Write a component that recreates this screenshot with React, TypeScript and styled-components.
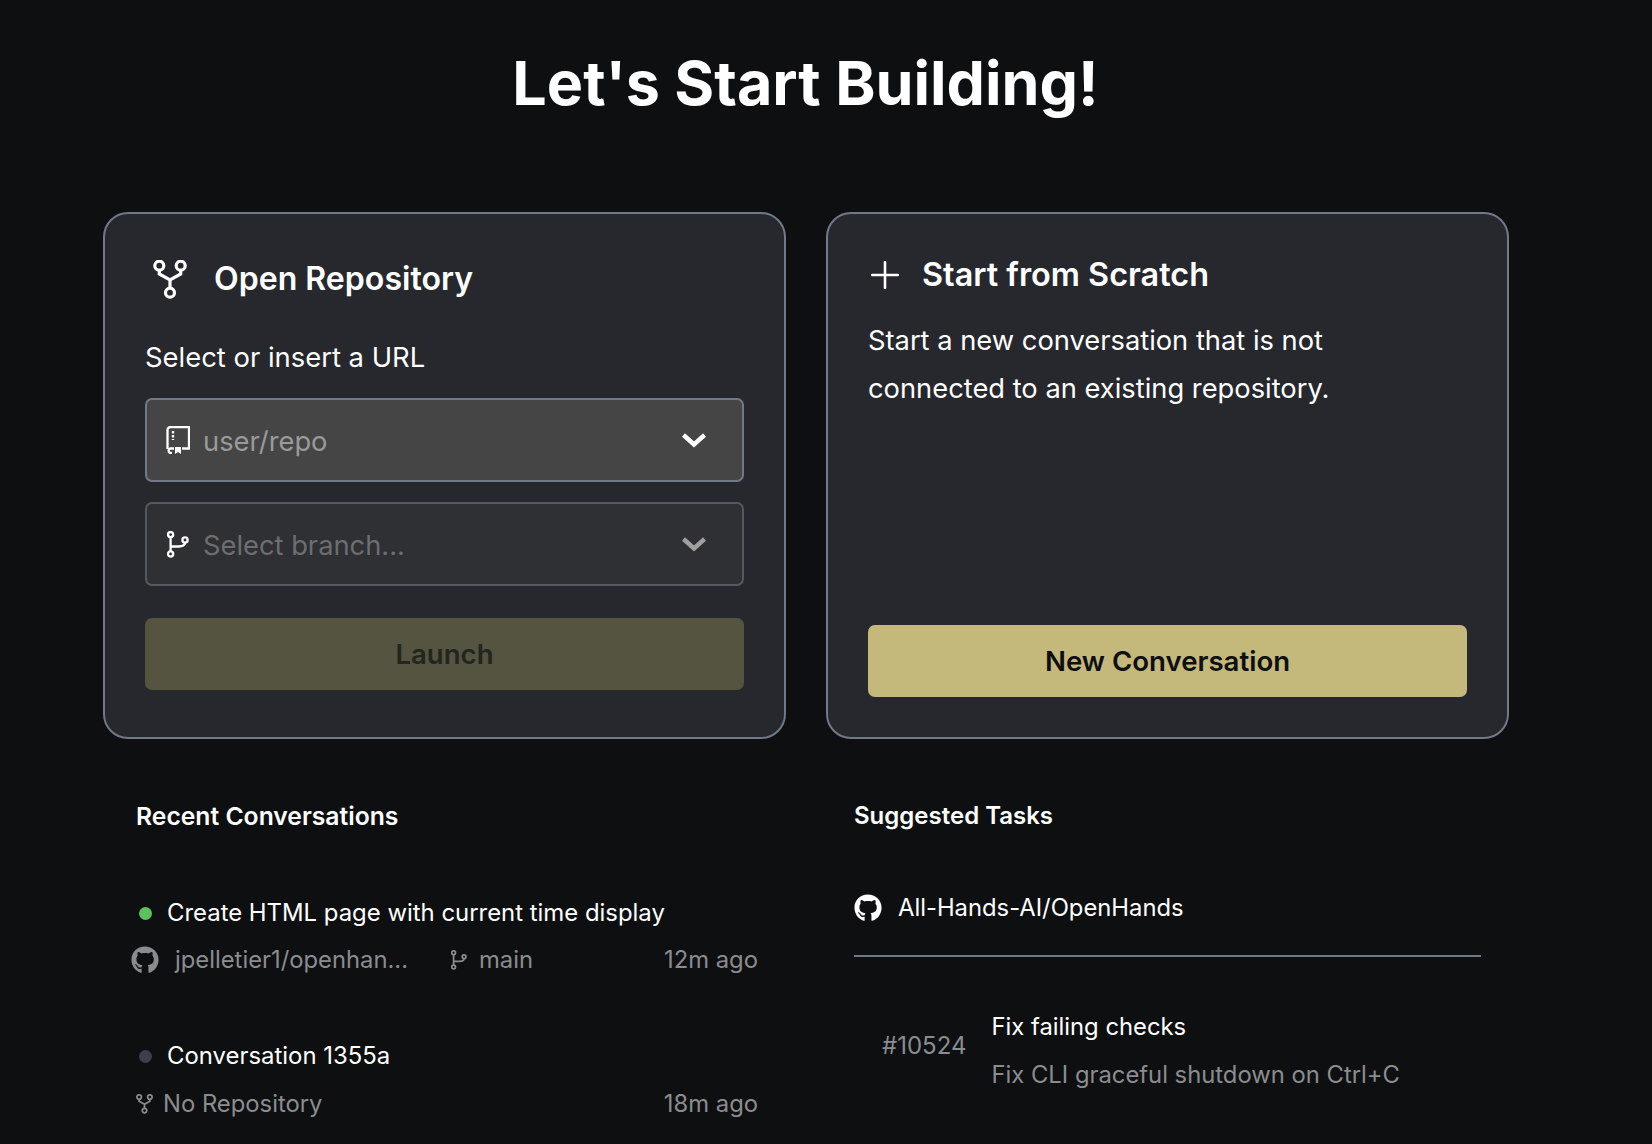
import { createGlobalStyle, styled } from 'styled-components';
import { FaGithub } from 'react-icons/fa';

const GlobalStyle = createGlobalStyle`
  html, body {
    margin: 0;
    height: 1144px;
    overflow: hidden;
    background: #0d0f11;
    color: #ffffff;
    font-family: Inter, "Liberation Sans", sans-serif;
  }
`;

const Page = styled.main`
  width: 1405px;
  margin-left: 103px;
`;

const Title = styled.h1`
  margin: 0;
  padding-top: 47px;
  height: 212px;
  box-sizing: border-box;
  font-size: 61px;
  line-height: 72px;
  font-weight: 700;
  text-align: center;
`;

const CardRow = styled.section`
  display: grid;
  grid-template-columns: 683px 683px;
  gap: 40px;
`;

const Card = styled.div`
  height: 527px;
  box-sizing: border-box;
  padding: 0 40px;
  background: #26282d;
  border: 2px solid #717888;
  border-radius: 25px;
  display: flex;
  flex-direction: column;
`;

const CardHeader = styled.div<{ $top: number; $gap: number; $indent: number; $size: number }>`
  display: flex;
  align-items: center;
  gap: ${(props) => props.$gap}px;
  margin-top: ${(props) => props.$top}px;
  padding-left: ${(props) => props.$indent}px;
  font-size: ${(props) => props.$size}px;
  line-height: 40px;
  font-weight: 600;
`;

const Label = styled.div`
  margin-top: 38px;
  font-size: 27.4px;
  line-height: 40px;
`;

const Select = styled.div<{ $active?: boolean }>`
  height: 84px;
  box-sizing: border-box;
  margin-top: ${(props) => (props.$active ? 21 : 20)}px;
  padding: 0 35px 0 18px;
  display: flex;
  align-items: center;
  gap: 12px;
  background: ${(props) => (props.$active ? '#454545' : '#2f3034')};
  border: 2px solid ${(props) => (props.$active ? '#717888' : '#54585f')};
  border-radius: 7px;
  font-size: 27.3px;
  color: ${(props) => (props.$active ? '#9a9a9a' : '#6d6e71')};
`;

const SelectIcon = styled.span`
  width: 26px;
  display: flex;
  justify-content: center;
`;

const SelectText = styled.span`
  flex: 1;
  position: relative;
  top: 1px;
`;

const ActionButton = styled.div<{ $disabled?: boolean }>`
  height: 72px;
  margin-top: auto;
  margin-bottom: ${(props) => (props.$disabled ? 47 : 40)}px;
  display: flex;
  align-items: center;
  justify-content: center;
  border-radius: 7px;
  font-size: 27.6px;
  font-weight: 600;
  background: ${(props) => (props.$disabled ? '#545441' : '#c4b87b')};
  color: ${(props) => (props.$disabled ? '#24251f' : '#0d0f11')};
`;

const Description = styled.p`
  margin: 22px 0 0;
  font-size: 27.3px;
  line-height: 48.4px;
`;

const Lists = styled.section`
  display: grid;
  grid-template-columns: 683px 655px;
  gap: 40px;
`;

const ListColumn = styled.div<{ $indent: number }>`
  padding-left: ${(props) => props.$indent}px;
`;

const SectionTitle = styled.h3<{ $size: number }>`
  margin: 0;
  padding-top: 61px;
  font-size: ${(props) => props.$size}px;
  line-height: 32px;
  font-weight: 600;
`;

const Conversation = styled.div<{ $top: number }>`
  margin-top: ${(props) => props.$top}px;
  width: 622px;
`;

const ConversationTitle = styled.div`
  display: flex;
  align-items: center;
  gap: 15px;
  padding-left: 3px;
  font-size: 23.9px;
  line-height: 32px;
`;

const Dot = styled.span<{ $color: string }>`
  width: 13px;
  height: 13px;
  border-radius: 50%;
  background: ${(props) => props.$color};
`;

const Meta = styled.div<{ $top: number }>`
  display: flex;
  align-items: center;
  margin-top: ${(props) => props.$top}px;
  font-size: 23.8px;
  line-height: 32px;
  color: #8b8c8f;
`;

const MetaGithub = styled(FaGithub)`
  margin-left: -5px;
  color: #8b8c8f;
`;

const RepoName = styled.span`
  margin-left: 16px;
  width: 276px;
`;

const BranchName = styled.span`
  margin-left: 12px;
`;

const NoRepo = styled.span`
  margin-left: 10px;
`;

const Time = styled.span`
  margin-left: auto;
`;

const RepoHeading = styled.div`
  display: flex;
  align-items: center;
  gap: 16px;
  margin-top: 60px;
  padding-bottom: 31px;
  border-bottom: 2px solid #717888;
  font-size: 23.8px;
  line-height: 32px;
`;

const Task = styled.div`
  display: flex;
  align-items: center;
  gap: 25px;
  margin-top: 46px;
  padding-left: 28px;
`;

const TaskNumber = styled.span`
  margin-bottom: 10px;
  font-size: 24px;
  color: #8b8c8f;
`;

const TaskBody = styled.div`
  font-size: 23.8px;
  line-height: 47.5px;
`;

const TaskDetail = styled.div`
  color: #8b8c8f;
`;

function Chevron({ color }: { color: string }) {
  return (
    <svg width="26" height="16" viewBox="0 0 26 16" fill="none">
      <path d="M2.5 3L13 12.5 23.5 3" stroke={color} strokeWidth="4.4" />
    </svg>
  );
}

function PlusIcon() {
  return (
    <svg width="28" height="28" viewBox="0 0 28 28" fill="none" stroke="#ffffff" strokeWidth="2.6" strokeLinecap="round">
      <path d="M14 1.2v25.6M1.2 14h25.6" />
    </svg>
  );
}

function ForkIcon({ width, height, color, weight }: { width: number; height: number; color: string; weight: number }) {
  return (
    <svg width={width} height={height} viewBox="0 0 34 39" fill="none" stroke={color} strokeWidth={weight}>
      <circle cx="6.3" cy="5.7" r="4.5" />
      <circle cx="27.7" cy="5.7" r="4.5" />
      <circle cx="17" cy="32.7" r="4.5" />
      <path d="M6.3 10.2v3.8L17 20l10.7-6v-3.8M17 20v8.2" />
    </svg>
  );
}

function BookIcon() {
  return (
    <svg width="24" height="28" viewBox="0 0 24 28" fill="none" stroke="#ffffff" strokeWidth="2.3">
      <path d="M1.5 23V4a3 3 0 0 1 3-3H23v21.5h-7" />
      <path d="M8 22.5H4a2.5 2.5 0 0 0 0 4.5h2" />
      <path d="M9 21h6v7l-3-2-3 2z" fill="#ffffff" stroke="none" />
      <path d="M7 5v9" strokeDasharray="2.4 1.6" />
    </svg>
  );
}

function BranchIcon({ width, height, color, weight }: { width: number; height: number; color: string; weight: number }) {
  return (
    <svg width={width} height={height} viewBox="0 0 22 27" fill="none" stroke={color} strokeWidth={weight}>
      <circle cx="3.6" cy="3.6" r="2.6" />
      <circle cx="3.6" cy="23" r="2.6" />
      <circle cx="18" cy="9" r="2.6" />
      <path d="M3.6 6.2v14.2M3.6 15.5h8c4 0 6.4-1.6 6.4-3.9" />
    </svg>
  );
}

export default function App() {
  return (
    <Page>
      <GlobalStyle />
      <Title>Let's Start Building!</Title>
      <CardRow>
        <Card>
          <CardHeader $top={45} $gap={27} $indent={8} $size={32.1}>
            <ForkIcon width={34} height={39} color="#ffffff" weight={3.2} />
            Open Repository
          </CardHeader>
          <Label>Select or insert a URL</Label>
          <Select $active>
            <SelectIcon>
              <BookIcon />
            </SelectIcon>
            <SelectText>user/repo</SelectText>
            <Chevron color="#ffffff" />
          </Select>
          <Select>
            <SelectIcon>
              <BranchIcon width={22} height={27} color="#ffffff" weight={2.3} />
            </SelectIcon>
            <SelectText>Select branch...</SelectText>
            <Chevron color="#a0a0a0" />
          </Select>
          <ActionButton $disabled>Launch</ActionButton>
        </Card>
        <Card>
          <CardHeader $top={41} $gap={23} $indent={3} $size={32.4}>
            <PlusIcon />
            Start from Scratch
          </CardHeader>
          <Description>
            Start a new conversation that is not
            <br />
            connected to an existing repository.
          </Description>
          <ActionButton>New Conversation</ActionButton>
        </Card>
      </CardRow>
      <Lists>
        <ListColumn $indent={33}>
          <SectionTitle $size={24.7}>Recent Conversations</SectionTitle>
          <Conversation $top={65}>
            <ConversationTitle>
              <Dot $color="#5cc15f" />
              Create HTML page with current time display
            </ConversationTitle>
            <Meta $top={15}>
              <MetaGithub size={28} />
              <RepoName>jpelletier1/openhan...</RepoName>
              <BranchIcon width={16} height={20} color="#8b8c8f" weight={2.4} />
              <BranchName>main</BranchName>
              <Time>12m ago</Time>
            </Meta>
          </Conversation>
          <Conversation $top={64}>
            <ConversationTitle>
              <Dot $color="#3d3f4d" />
              Conversation 1355a
            </ConversationTitle>
            <Meta $top={16}>
              <ForkIcon width={17} height={20} color="#8b8c8f" weight={3.4} />
              <NoRepo>No Repository</NoRepo>
              <Time>18m ago</Time>
            </Meta>
          </Conversation>
        </ListColumn>
        <ListColumn $indent={28}>
          <SectionTitle $size={24}>Suggested Tasks</SectionTitle>
          <RepoHeading>
            <FaGithub size={28} />
            All-Hands-AI/OpenHands
          </RepoHeading>
          <Task>
            <TaskNumber>#10524</TaskNumber>
            <TaskBody>
              Fix failing checks
              <TaskDetail>Fix CLI graceful shutdown on Ctrl+C</TaskDetail>
            </TaskBody>
          </Task>
        </ListColumn>
      </Lists>
    </Page>
  );
}
